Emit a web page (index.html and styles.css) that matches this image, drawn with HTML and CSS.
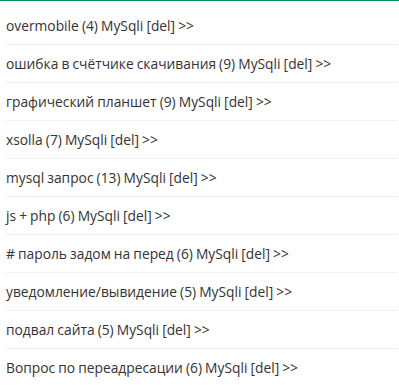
FILE: index.html
```html
<!DOCTYPE html>
<html><head><meta charset="utf-8"><link rel="stylesheet" href="styles.css"></head>
<body>
<div class="panel">
  <ul class="list">
    <li class="item">overmobile (4) MySqli [del] &gt;&gt;</li>
    <li class="item">ошибка в счётчике скачивания (9) MySqli [del] &gt;&gt;</li>
    <li class="item">графический планшет (9) MySqli [del] &gt;&gt;</li>
    <li class="item">xsolla (7) MySqli [del] &gt;&gt;</li>
    <li class="item">mysql запрос (13) MySqli [del] &gt;&gt;</li>
    <li class="item">js + php (6) MySqli [del] &gt;&gt;</li>
    <li class="item"># пароль задом на перед (6) MySqli [del] &gt;&gt;</li>
    <li class="item">уведомление/вывидение (5) MySqli [del] &gt;&gt;</li>
    <li class="item">подвал сайта (5) MySqli [del] &gt;&gt;</li>
    <li class="item">Вопрос по переадресации (6) MySqli [del] &gt;&gt;</li>
  </ul>
</div>
</body></html>
```
FILE: styles.css
```css
html,body{margin:0;padding:0;background:#fff}
.panel{border-top:1px solid #0b8a6b;padding:6px 1px 0 6px;font-family:"Open Sans",sans-serif;font-size:13.8px;word-spacing:-0.5px;color:#333}
.list{list-style:none;margin:0;padding:0}
.item{line-height:20px;padding:9px 0 8px;border-bottom:1px solid #efefef}
.item:last-child{border-bottom:none}
```
